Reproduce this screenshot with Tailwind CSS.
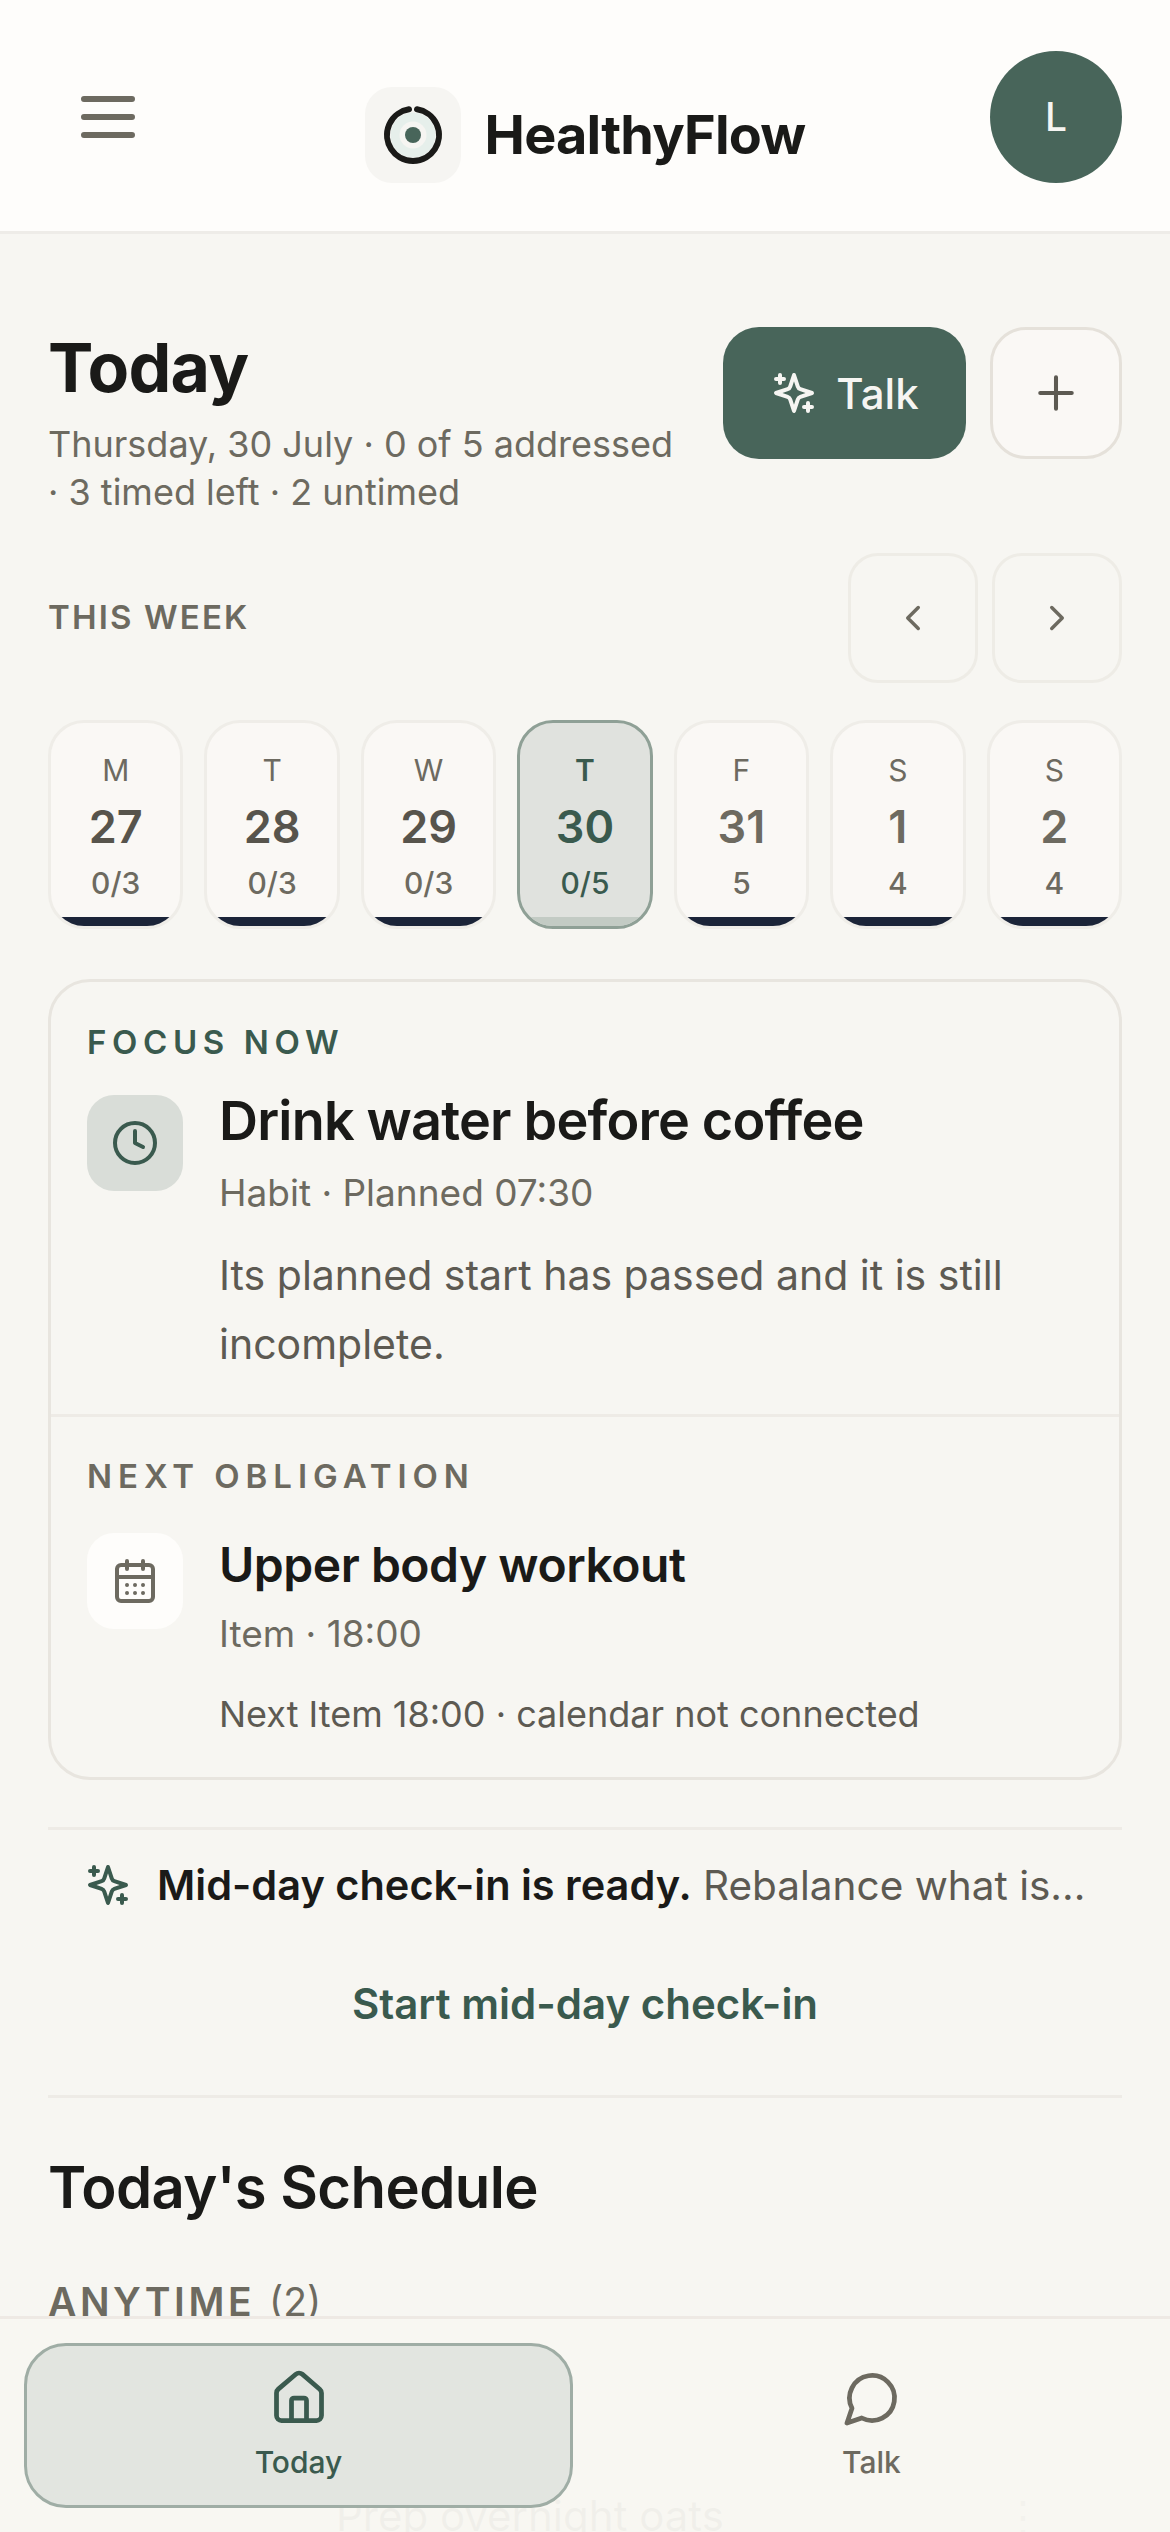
<!DOCTYPE html>
<html lang="en">
<head>
  <meta charset="UTF-8" />
  <meta name="viewport" content="width=device-width, initial-scale=1.0" />
  <title>HealthyFlow</title>
  <script src="https://cdn.jsdelivr.net/npm/@tailwindcss/browser@4"></script>
</head>
<body class="relative w-[1170px] h-[2532px] overflow-hidden bg-[#f7f6f2] text-[#1a1a18] font-['Inter',sans-serif]">

  <header class="grid grid-cols-[1fr_auto_1fr] h-[234px] px-[48px] pt-[51px] bg-[#fefdfb] border-b-[3px] border-[#eeece8]">
    <button class="justify-self-start w-[72px] h-[72px] ml-[24px] mt-[30px] text-[#6d6a60]">
      <svg width="72" height="72" viewBox="0 0 24 24" fill="none" stroke="currentColor" stroke-width="2" stroke-linecap="round"><path d="M4 6h16M4 12h16M4 18h16"/></svg>
    </button>
    <div class="flex items-center gap-[24px] h-[96px] mt-[36px]">
      <div class="flex items-center justify-center w-[96px] h-[96px] rounded-[27px] bg-[#f6f5f2]">
        <svg width="66" height="66" viewBox="0 0 66 66" fill="none">
          <circle cx="33" cy="33" r="18" stroke="#e6efeb" stroke-width="9"/>
          <path d="M29 7.3A26 26 0 1 0 37 7.3" stroke="#1a1a18" stroke-width="6" stroke-linecap="round"/>
          <circle cx="33" cy="33" r="8" fill="#48655a"/>
        </svg>
      </div>
      <span class="text-[54px] leading-none font-bold tracking-[-0.015em]">HealthyFlow</span>
    </div>
    <div class="justify-self-end flex items-center justify-center w-[132px] h-[132px] rounded-full bg-[#48655a] text-[#f6f5f2] text-[39px] font-medium">L</div>
  </header>

  <main class="px-[48px]">
    <section class="flex justify-between pt-[93px]">
      <div class="pt-[1px]">
        <h1 class="text-[68px] leading-[78px] font-bold tracking-[-0.01em]">Today</h1>
        <p class="w-[640px] mt-[14px] text-[36px] leading-[48px] text-[#6d6a60]">Thursday, 30 July · 0 of 5 addressed · 3 timed left · 2 untimed</p>
      </div>
      <div class="flex gap-[24px]">
        <button class="flex items-center justify-center gap-[18px] w-[243px] h-[132px] rounded-[36px] bg-[#48655a] text-[#f6f5f2] text-[42px] font-medium">
          <svg width="48" height="48" viewBox="0 0 24 24" fill="none" stroke="currentColor" stroke-width="2" stroke-linecap="round" stroke-linejoin="round"><path d="m12 3-1.912 5.813a2 2 0 0 1-1.275 1.275L3 12l5.813 1.912a2 2 0 0 1 1.275 1.275L12 21l1.912-5.813a2 2 0 0 1 1.275-1.275L21 12l-5.813-1.912a2 2 0 0 1-1.275-1.275L12 3Z"/><path d="M5 3v4M19 17v4M3 5h4M17 19h4"/></svg>
          Talk
        </button>
        <button class="flex items-center justify-center w-[132px] h-[132px] rounded-[36px] border-[3px] border-[#e5e1da] bg-[#faf8f5] text-[#5d5a52]">
          <svg width="54" height="54" viewBox="0 0 24 24" fill="none" stroke="currentColor" stroke-width="1.8" stroke-linecap="round"><path d="M5 12h14M12 5v14"/></svg>
        </button>
      </div>
    </section>

    <section class="flex items-center justify-between mt-[37px]">
      <h2 class="text-[33px] font-semibold tracking-[0.065em] text-[#6d6a60]">THIS WEEK</h2>
      <div class="flex gap-[14px]">
        <button class="flex items-center justify-center w-[130px] h-[130px] rounded-[30px] border-[3px] border-[#eeece6] text-[#6d6a60]">
          <svg width="42" height="42" viewBox="0 0 24 24" fill="none" stroke="currentColor" stroke-width="2" stroke-linecap="round" stroke-linejoin="round"><path d="m15 18-6-6 6-6"/></svg>
        </button>
        <button class="flex items-center justify-center w-[130px] h-[130px] rounded-[30px] border-[3px] border-[#eeece6] text-[#6d6a60]">
          <svg width="42" height="42" viewBox="0 0 24 24" fill="none" stroke="currentColor" stroke-width="2" stroke-linecap="round" stroke-linejoin="round"><path d="m9 18 6-6-6-6"/></svg>
        </button>
      </div>
    </section>

    <section class="grid grid-cols-7 gap-[21px] mt-[37px]">
      <div class="relative flex flex-col items-center h-[209px] rounded-[36px] overflow-hidden border-[3px] border-[#efede8] bg-[#faf8f5] text-[#6d6a60]">
        <span class="mt-[29px] text-[30px] leading-[36px]">M</span>
        <span class="mt-[12px] text-[45px] leading-[54px] font-semibold text-[#57544c]">27</span>
        <span class="mt-[11px] text-[30px] leading-[36px] font-medium">0/3</span>
        <span class="absolute bottom-0 inset-x-[10px] h-[9px] bg-[#1b2438]"></span>
      </div>
      <div class="relative flex flex-col items-center h-[209px] rounded-[36px] overflow-hidden border-[3px] border-[#efede8] bg-[#faf8f5] text-[#6d6a60]">
        <span class="mt-[29px] text-[30px] leading-[36px]">T</span>
        <span class="mt-[12px] text-[45px] leading-[54px] font-semibold text-[#57544c]">28</span>
        <span class="mt-[11px] text-[30px] leading-[36px] font-medium">0/3</span>
        <span class="absolute bottom-0 inset-x-[10px] h-[9px] bg-[#1b2438]"></span>
      </div>
      <div class="relative flex flex-col items-center h-[209px] rounded-[36px] overflow-hidden border-[3px] border-[#efede8] bg-[#faf8f5] text-[#6d6a60]">
        <span class="mt-[29px] text-[30px] leading-[36px]">W</span>
        <span class="mt-[12px] text-[45px] leading-[54px] font-semibold text-[#57544c]">29</span>
        <span class="mt-[11px] text-[30px] leading-[36px] font-medium">0/3</span>
        <span class="absolute bottom-0 inset-x-[10px] h-[9px] bg-[#1b2438]"></span>
      </div>
      <div class="relative flex flex-col items-center h-[209px] rounded-[36px] overflow-hidden border-[3px] border-[#8fa096] bg-[#e0e2de] text-[#3a5a4e]">
        <span class="mt-[29px] text-[30px] leading-[36px] font-semibold">T</span>
        <span class="mt-[12px] text-[45px] leading-[54px] font-semibold">30</span>
        <span class="mt-[11px] text-[30px] leading-[36px] font-medium">0/5</span>
        <span class="absolute bottom-0 inset-x-0 h-[9px] bg-[#c3cbc4]"></span>
      </div>
      <div class="relative flex flex-col items-center h-[209px] rounded-[36px] overflow-hidden border-[3px] border-[#efede8] bg-[#faf8f5] text-[#6d6a60]">
        <span class="mt-[29px] text-[30px] leading-[36px]">F</span>
        <span class="mt-[12px] text-[45px] leading-[54px] font-semibold">31</span>
        <span class="mt-[11px] text-[30px] leading-[36px] font-medium">5</span>
        <span class="absolute bottom-0 inset-x-[10px] h-[9px] bg-[#1b2438]"></span>
      </div>
      <div class="relative flex flex-col items-center h-[209px] rounded-[36px] overflow-hidden border-[3px] border-[#efede8] bg-[#faf8f5] text-[#6d6a60]">
        <span class="mt-[29px] text-[30px] leading-[36px]">S</span>
        <span class="mt-[12px] text-[45px] leading-[54px] font-semibold">1</span>
        <span class="mt-[11px] text-[30px] leading-[36px] font-medium">4</span>
        <span class="absolute bottom-0 inset-x-[10px] h-[9px] bg-[#1b2438]"></span>
      </div>
      <div class="relative flex flex-col items-center h-[209px] rounded-[36px] overflow-hidden border-[3px] border-[#efede8] bg-[#faf8f5] text-[#6d6a60]">
        <span class="mt-[29px] text-[30px] leading-[36px]">S</span>
        <span class="mt-[12px] text-[45px] leading-[54px] font-semibold">2</span>
        <span class="mt-[11px] text-[30px] leading-[36px] font-medium">4</span>
        <span class="absolute bottom-0 inset-x-[10px] h-[9px] bg-[#1b2438]"></span>
      </div>
    </section>

    <section class="mt-[50px] h-[801px] rounded-[42px] border-[3px] border-[#e8e5df]">
      <div class="h-[435px] border-b-[3px] border-[#eeebe6] px-[36px] pt-[40px]">
        <h3 class="text-[33px] leading-[40px] font-semibold tracking-[0.17em] text-[#3a5a4e]">FOCUS NOW</h3>
        <div class="flex gap-[36px] mt-[33px]">
          <div class="flex items-center justify-center shrink-0 w-[96px] h-[96px] rounded-[27px] bg-[#d9ddd8] text-[#3a5a4e]">
            <svg width="48" height="48" viewBox="0 0 24 24" fill="none" stroke="currentColor" stroke-width="2" stroke-linecap="round" stroke-linejoin="round"><circle cx="12" cy="12" r="10"/><path d="M12 6v6l4 2"/></svg>
          </div>
          <div class="-mt-[7px]">
            <p class="text-[54px] leading-[66px] font-semibold tracking-[-0.015em]">Drink water before coffee</p>
            <p class="mt-[15px] text-[37px] leading-[48px] text-[#6d6a60]">Habit · Planned 07:30</p>
            <p class="mt-[24px] text-[41px] leading-[69px] text-[#5d5a52]">Its planned start has passed and it is still incomplete.</p>
          </div>
        </div>
      </div>
      <div class="px-[36px] pt-[39px]">
        <h3 class="text-[33px] leading-[40px] font-semibold tracking-[0.18em] text-[#6d6a60]">NEXT OBLIGATION</h3>
        <div class="flex gap-[36px] mt-[37px]">
          <div class="flex items-center justify-center shrink-0 w-[96px] h-[96px] rounded-[27px] bg-[#fefdfb] text-[#6d6a60]">
            <svg width="48" height="48" viewBox="0 0 24 24" fill="none" stroke="currentColor" stroke-width="2" stroke-linecap="round" stroke-linejoin="round"><path d="M8 2v4M16 2v4"/><rect x="3" y="4" width="18" height="18" rx="2"/><path d="M3 10h18M8 14h.01M12 14h.01M16 14h.01M8 18h.01M12 18h.01M16 18h.01"/></svg>
          </div>
          <div class="mt-[2px]">
            <p class="text-[48px] leading-[60px] font-semibold tracking-[-0.01em]">Upper body workout</p>
            <p class="mt-[15px] text-[37px] leading-[48px] text-[#6d6a60]">Item · 18:00</p>
            <p class="mt-[32px] text-[36px] leading-[48px] text-[#5d5a52]">Next Item 18:00 · calendar not connected</p>
          </div>
        </div>
      </div>
    </section>

    <section class="mt-[47px] h-[271px] border-y-[3px] border-[#eeebe6]">
      <div class="flex items-center gap-[25px] pl-[36px] h-[110px]">
        <svg class="text-[#3a5a4e]" width="48" height="48" viewBox="0 0 24 24" fill="none" stroke="currentColor" stroke-width="2" stroke-linecap="round" stroke-linejoin="round"><path d="m12 3-1.912 5.813a2 2 0 0 1-1.275 1.275L3 12l5.813 1.912a2 2 0 0 1 1.275 1.275L12 21l1.912-5.813a2 2 0 0 1 1.275-1.275L21 12l-5.813-1.912a2 2 0 0 1-1.275-1.275L12 3Z"/><path d="M5 3v4M19 17v4M3 5h4M17 19h4"/></svg>
        <p class="text-[40.5px] leading-[54px] text-[#5d5a52] whitespace-nowrap"><span class="text-[41.5px] font-semibold text-[#1a1a18]">Mid-day check-in is ready.</span> Rebalance what is...</p>
      </div>
      <p class="mt-[37px] text-center text-[42px] leading-[54px] font-semibold text-[#3a5a4e]">Start mid-day check-in</p>
    </section>

    <h2 class="mt-[50px] text-[58px] leading-[78px] font-semibold tracking-[-0.01em]">Today's Schedule</h2>
    <p class="mt-[52px] text-[39px] leading-[48px] text-[#6d6a60]"><span class="font-semibold tracking-[0.09em]">ANYTIME</span> <span class="ml-[3px]">(2)</span></p>

    <div class="flex items-center justify-between mt-[160px] pl-[288px] pr-[78px]">
      <span class="text-[42px] leading-[60px]">Prep overnight oats</span>
      <span class="text-[42px] leading-[60px] text-[#6d6a60]">⋮</span>
    </div>
  </main>

  <nav class="absolute inset-x-0 bottom-0 flex h-[216px] pl-[24px] pt-[24px] bg-[#f8f7f2]/97 border-t-[3px] border-[#eee9e4]">
    <a class="flex flex-col items-center w-[549px] h-[165px] rounded-[42px] border-[3px] border-[#9fada5] bg-[#e2e5e0] text-[#3a5a4e]">
      <svg class="mt-[22px]" width="60" height="60" viewBox="0 0 24 24" fill="none" stroke="currentColor" stroke-width="1.9" stroke-linecap="round" stroke-linejoin="round"><path d="M15 21v-8a1 1 0 0 0-1-1h-4a1 1 0 0 0-1 1v8"/><path d="M3 10a2 2 0 0 1 .709-1.528l7-5.999a2 2 0 0 1 2.582 0l7 5.999A2 2 0 0 1 21 10v9a2 2 0 0 1-2 2H5a2 2 0 0 1-2-2z"/></svg>
      <span class="mt-[16px] text-[30px] leading-[36px] font-medium">Today</span>
    </a>
    <a class="flex flex-col items-center flex-1 h-[165px] text-[#6d6a60]">
      <svg class="mt-[25px]" width="60" height="60" viewBox="0 0 24 24" fill="none" stroke="currentColor" stroke-width="1.9" stroke-linecap="round" stroke-linejoin="round"><path d="M7.9 20A9 9 0 1 0 4 16.1L2 22Z"/></svg>
      <span class="mt-[16px] text-[30px] leading-[36px] font-medium">Talk</span>
    </a>
  </nav>
</body>
</html>
